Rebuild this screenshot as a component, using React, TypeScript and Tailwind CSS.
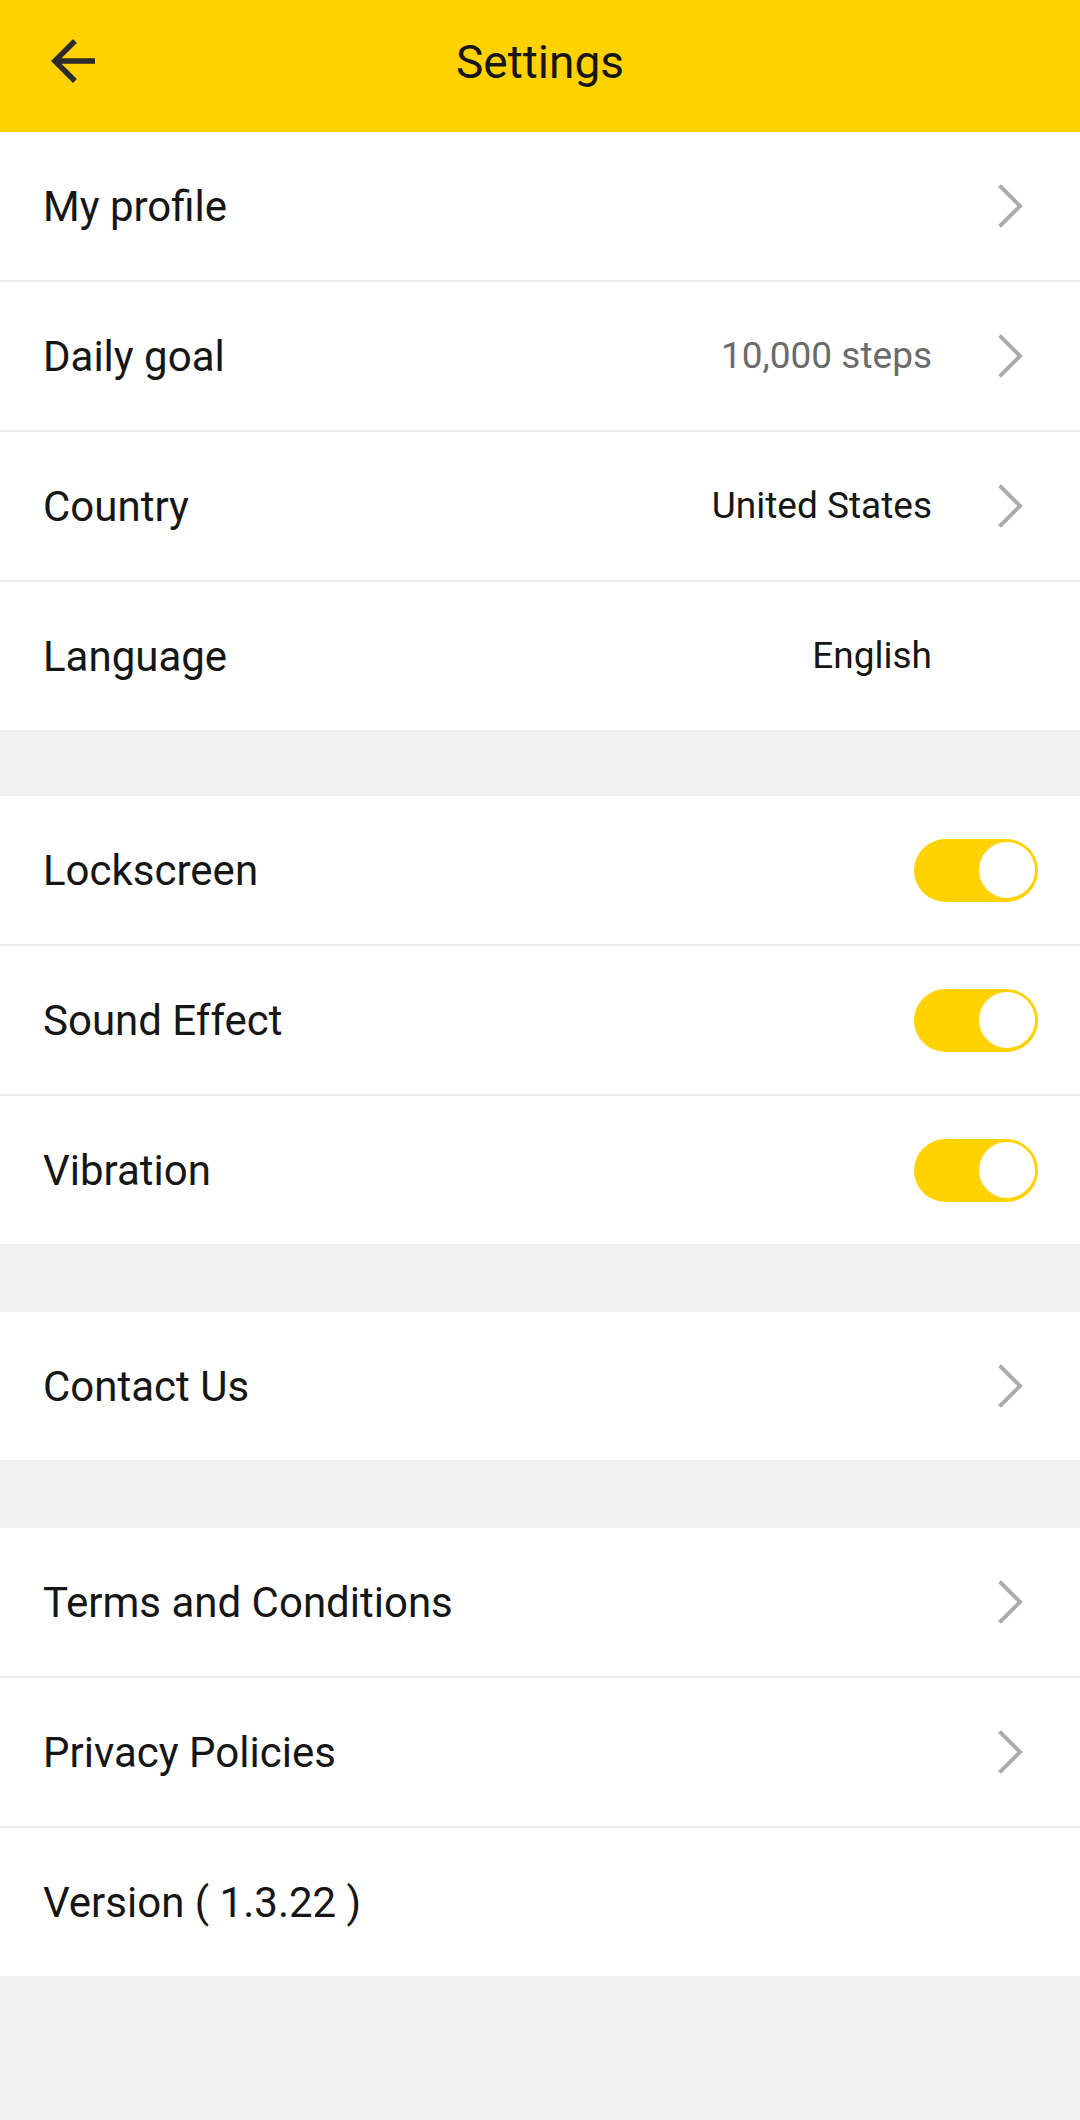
import React from "react"

type Row = {
  label: string
  value?: string
  valueMuted?: boolean
  chevron?: boolean
  toggle?: boolean
}

const groups: Row[][] = [
  [
    { label: "My profile", chevron: true },
    { label: "Daily goal", value: "10,000 steps", valueMuted: true, chevron: true },
    { label: "Country", value: "United States", chevron: true },
    { label: "Language", value: "English" },
  ],
  [
    { label: "Lockscreen", toggle: true },
    { label: "Sound Effect", toggle: true },
    { label: "Vibration", toggle: true },
  ],
  [{ label: "Contact Us", chevron: true }],
  [
    { label: "Terms and Conditions", chevron: true },
    { label: "Privacy Policies", chevron: true },
    { label: "Version ( 1.3.22 )" },
  ],
]

function Chevron() {
  return (
    <svg width="28" height="44" viewBox="0 0 28 44" fill="none">
      <path d="M4 3 L23 22 L4 41" stroke="#ababab" strokeWidth="4" strokeLinecap="square" strokeLinejoin="miter" />
    </svg>
  )
}

function Toggle() {
  return (
    <div className="w-[124px] h-[63px] rounded-full bg-[#ffd200] flex items-center justify-end">
      <div className="w-[60px] h-[60px] rounded-full bg-white border-2 border-[#ffd200] mr-[1px]" />
    </div>
  )
}

function SettingRow({ row }: { row: Row }) {
  return (
    <div className="h-[148px] bg-white flex items-center pl-[43px]">
      <span className="flex-1 text-[42px] text-[#161616]">{row.label}</span>
      {row.value && (
        <span className={`text-[37px] ${row.valueMuted ? "text-[#6b6b6b]" : "text-[#161616]"}`}>{row.value}</span>
      )}
      {row.toggle ? (
        <div className="pr-[42px]">
          <Toggle />
        </div>
      ) : (
        <div className="w-[148px] flex items-center justify-end pr-[55px]">{row.chevron && <Chevron />}</div>
      )}
    </div>
  )
}

export default function App() {
  return (
    <div className="w-[1080px] min-h-[2120px] bg-[#f0f0f0]" style={{ fontFamily: "Roboto, 'Noto Sans', sans-serif" }}>
      <header className="h-[132px] bg-[#ffd200] relative flex items-center justify-center pb-[8px]">
        <button className="absolute left-[40px] top-[28px]" aria-label="Back">
          <svg width="66" height="66" viewBox="0 0 24 24" fill="#2b2b2b">
            <path d="M20 11H7.83l5.59-5.59L12 4l-8 8 8 8 1.41-1.41L7.83 13H20v-2z" />
          </svg>
        </button>
        <h1 className="text-[46px] text-[#161616]">Settings</h1>
      </header>

      {groups.map((group, gi) => (
        <div key={gi} className={gi === 0 ? "" : gi === 1 ? "mt-[66px]" : "mt-[68px]"}>
          <div className="flex flex-col gap-[2px] bg-[#ececec]">
            {group.map((row) => (
              <SettingRow key={row.label} row={row} />
            ))}
          </div>
        </div>
      ))}
    </div>
  )
}
